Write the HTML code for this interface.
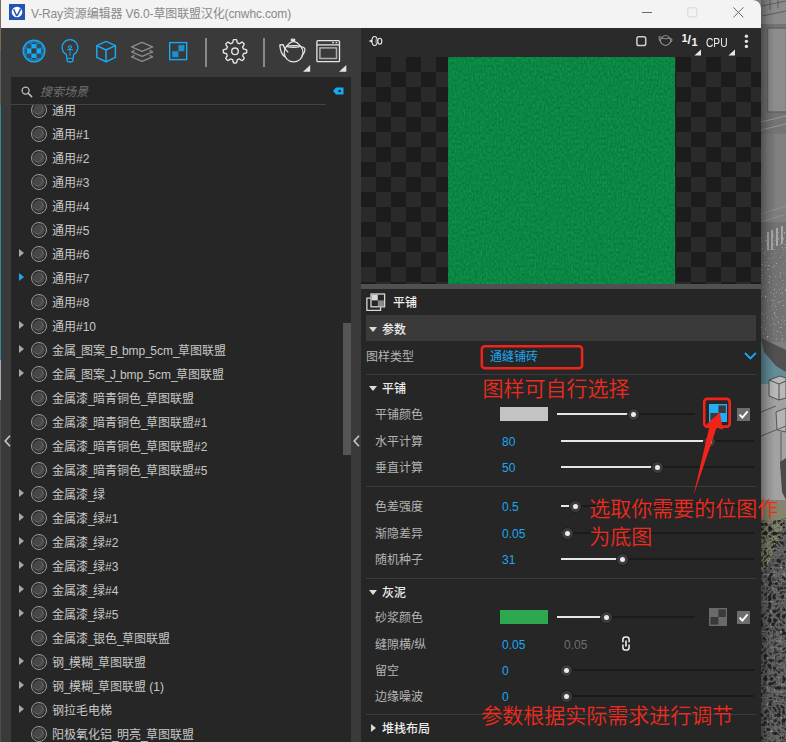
<!DOCTYPE html>
<html lang="zh-CN"><head><meta charset="utf-8"><title>V-Ray资源编辑器</title>
<style>
*{box-sizing:border-box;margin:0;padding:0}
html,body{width:786px;height:742px;overflow:hidden;background:#7d7d7d}
body{position:relative;font-family:"Liberation Sans","Noto Sans CJK SC",sans-serif;font-size:12px;color:#c8c8c8}
.abs{position:absolute}
#bg{left:761px;top:0;width:25px;height:742px}
#ledge{left:0;top:0;width:1px;height:742px;background:linear-gradient(#7a6858 0,#7a6858 50px,#5c6058 50px,#5c6058 105px,#2f8a9c 105px,#2f8a9c 360px,#aaa 360px,#aaa 400px,#4c4c4c 400px)}
#win{left:1px;top:0;width:760px;height:742px;background:#262626;border-top-right-radius:8px;overflow:hidden}
#title{left:0;top:0;width:760px;height:28px;background:#f3f3f3}
#title .t{left:30px;top:1px;line-height:27px;color:#898989;font-size:12px;white-space:nowrap;letter-spacing:-0.14px}
#lp{left:0;top:28px;width:360px;height:714px;background:#3a3a3a}
#search{left:10px;top:49px;width:340px;height:665px;background:#262626}
.it{position:absolute;left:0;width:332px;height:24px;line-height:24px;white-space:nowrap}
.it span{position:absolute;left:41px;top:1px;color:#c6c6c6;font-size:12px}
.it u{text-decoration:none;letter-spacing:-1.7px}
.it u.c{letter-spacing:-1.1px}
.ball{position:absolute;left:19.5px;top:3.5px;width:16px;height:16px;border-radius:50%;border:1px solid #9c9c9c;background:radial-gradient(circle at 38% 36%,rgba(0,0,0,0) 4.6px,rgba(255,255,255,.13) 5.2px,rgba(0,0,0,0) 6.4px),radial-gradient(circle at 50% 50%,#484848 0,#484848 5.4px,#262626 6px)}
.tri{position:absolute;left:8px;top:7.3px;width:0;height:0;border-left:5.5px solid #a8a8a8;border-top:4.4px solid transparent;border-bottom:4.4px solid transparent}
.tri.b{border-left-color:#18a9f2}
#rp{left:360px;top:28px;width:400px;height:714px;background:#262626}
#ptool{left:0;top:0;width:400px;height:29px;background:#2a2a2a}
#prev{left:0;top:29px;width:400px;height:227px;background-color:#2a2a2a;
 background-image:conic-gradient(#1c1c1c 25%,#2a2a2a 0 50%,#1c1c1c 0 75%,#2a2a2a 0);background-size:30px 30px;background-position:0 0}
#green{left:87px;top:0;width:227px;height:227px;background:#0e9a4b}
#split{left:0;top:256px;width:400px;height:5px;background:#505050}
.lbl{position:absolute;white-space:nowrap;line-height:16px;color:#b4b4b4}
.hd{position:absolute;white-space:nowrap;line-height:16px;color:#ececec;font-weight:500}
.val{position:absolute;white-space:nowrap;line-height:16px;color:#1ea7f0}
.sep{position:absolute;left:5px;width:390px;height:1px;background:#3c3c3c}
.trk{position:absolute;height:2px;background:#1a1a1a}
.fil{position:absolute;height:2px;background:#e6e6e6}
.knb{position:absolute;width:11px;height:11px;border-radius:50%;background:#ececec;border:3px solid #3c3c3c;box-shadow:0 0 0 1px #1e1e1e}
.dn{position:absolute;width:0;height:0;border-top:5.5px solid #dcdcdc;border-left:4px solid transparent;border-right:4px solid transparent}
.rt{position:absolute;width:0;height:0;border-left:5px solid #d8d8d8;border-top:4px solid transparent;border-bottom:4px solid transparent}
.chk{position:absolute;width:13px;height:13px;background:#6e6e6e}
.red{position:absolute;white-space:nowrap;color:#f02a1e;font-family:"Liberation Sans","Noto Sans CJK SC",sans-serif;font-size:21px;line-height:26px;font-weight:350;letter-spacing:0}
svg{position:absolute;overflow:visible}
</style></head><body>
<div id="bg" class="abs"><svg style="left:0;top:0" width="25" height="742" viewBox="761 0 25 742">
<defs>
 <linearGradient id="sh" x1="0" x2="1" y1="0" y2="0"><stop offset="0" stop-color="#000" stop-opacity=".34"/><stop offset=".5" stop-color="#000" stop-opacity=".12"/><stop offset="1" stop-color="#000" stop-opacity="0"/></linearGradient>
 <filter id="sp" color-interpolation-filters="sRGB" x="0" y="0" width="100%" height="100%"><feTurbulence type="fractalNoise" baseFrequency=".55" numOctaves="2" seed="7"/><feColorMatrix type="matrix" values="0 0 0 0 1  0 0 0 0 1  0 0 0 0 1  0 0 3.2 0 -2.05"/></filter>
 <filter id="dk" color-interpolation-filters="sRGB" x="0" y="0" width="100%" height="100%"><feTurbulence type="turbulence" baseFrequency=".22" numOctaves="2" seed="11"/><feColorMatrix type="matrix" values="0 0 0 0 .12  0 0 0 0 .12  0 0 0 0 .12  0 2.6 0 0 -.35"/></filter>
 <filter id="lt" color-interpolation-filters="sRGB" x="0" y="0" width="100%" height="100%"><feTurbulence type="fractalNoise" baseFrequency=".3" numOctaves="1" seed="23"/><feColorMatrix type="matrix" values="0 0 0 0 .82  0 0 0 0 .82  0 0 0 0 .82  2.8 0 0 0 -1.75"/></filter>
</defs>
<rect x="761" y="0" width="25" height="742" fill="#7e7e7e"/>
<rect x="761" y="0" width="25" height="24" fill="#8b8b8b"/>
<path d="M762 6 L786 1 M762 16 L786 11 M770 0 V10 M778 0 V8" stroke="#5e5e5e" stroke-width="1" fill="none"/>
<rect x="761" y="24" width="25" height="110" fill="#747474"/>
<rect x="767.5" y="28" width="19" height="84" fill="#8d8d8d" stroke="#636363" stroke-width="1.4"/>
<path d="M761 122 L786 116 M761 130 L786 124" stroke="#9a9a9a" stroke-width="1" fill="none"/>
<rect x="761" y="134" width="25" height="80" fill="#7b7b7b"/>
<rect x="775" y="134" width="11" height="78" fill="#808080"/>
<path d="M761 214 L786 206 M761 222 L786 214" stroke="#8f8f8f" stroke-width="1" fill="none"/>
<rect x="761" y="222" width="25" height="120" fill="#727272"/>
<path d="M768 232 V250 M772 230 V250 M777 228 V246 M782 226 V244" stroke="#c8c8c8" stroke-width="1.2"/>
<rect x="761" y="232" width="25" height="110" filter="url(#sp)" opacity=".8"/>
<path d="M761 342 L775 346 L786 352 V392 L761 392 Z" fill="#628d99"/>
<path d="M761 338 L786 350 V372 L776 366 L764 352 Z" fill="#505050"/>
<rect x="761" y="384" width="25" height="122" fill="#a2a2a2"/>
<path d="M769 380 L780 376 L786 378 V398 L779 400 L769 396 Z" fill="#b9b9b9" stroke="#4e4e4e" stroke-width="1"/>
<path d="M769 380 L779 384 L786 381 M779 384 V400" stroke="#4e4e4e" stroke-width="1" fill="none"/>
<path d="M776 412 L786 408 V432 L777 430 Z" fill="#b4b4b4" stroke="#555" stroke-width="1"/>
<path d="M761 412 L776 406 M761 436 L786 426 M781 432 V470" stroke="#5a5a5a" stroke-width="1" fill="none"/>
<path d="M780 462 L786 458 V500 L782 492 Z" fill="#4a4a4a"/>
<rect x="761" y="500" width="25" height="70" fill="#83866c"/>
<path d="M761 528 L786 518 M761 540 L786 530" stroke="#5c5c50" stroke-width="1" fill="none"/>
<path d="M761 574 L770 560 L778 540 L786 520 V742 H761 Z" fill="#666"/>
<rect x="761" y="520" width="25" height="222" filter="url(#dk)"/>
<rect x="761" y="560" width="25" height="182" filter="url(#lt)"/>
<rect x="761" y="0" width="14" height="742" fill="url(#sh)"/>
</svg></div>
<div id="ledge" class="abs"></div>
<div id="win" class="abs">
 <div id="title" class="abs">
  <svg style="left:8px;top:4px" width="16" height="16" viewBox="0 0 16 16"><rect width="16" height="16" fill="#2553b4"/><circle cx="8" cy="8" r="5.3" fill="#fff"/><path d="M4.6 5.2 L7.2 11 Q7.8 12 8.5 11 L11.8 4.6" fill="none" stroke="#2553b4" stroke-width="1.5"/></svg>
  <div class="abs t">V-Ray资源编辑器 V6.0-草图联盟汉化(cnwhc.com)</div>
  <svg style="left:641px;top:12px" width="11" height="2"><rect width="10" height="1" fill="#666"/></svg>
  <svg style="left:686px;top:7px" width="12" height="12"><rect x=".8" y=".8" width="9" height="9" rx="1.2" fill="none" stroke="#d6d6d6"/></svg>
  <svg style="left:732px;top:7px" width="12" height="12"><path d="M.4 .4 L10.4 10.4 M10.4 .4 L.4 10.4" stroke="#666" stroke-width="1" fill="none"/></svg>
 </div>
 <div id="lp" class="abs">
  <!-- toolbar icons placeholder -->
  <svg style="left:-1px;top:-28px" width="362" height="80" viewBox="0 0 362 80">
<defs><clipPath id="cs"><circle cx="34" cy="51" r="9.6"/></clipPath></defs>
<circle cx="34" cy="51" r="10.9" fill="#1d79ab" stroke="#18a9f2" stroke-width="1.2"/>
<g clip-path="url(#cs)">
 <rect x="26.8" y="44.1" width="14.5" height="13.8" fill="#2f4d5e"/><rect x="31.4" y="48.4" width="5.1" height="5.2" fill="#3a3a3a"/>
 <rect x="31.4" y="44.1" width="5.1" height="4.3" fill="#1aaaf4"/><rect x="31.4" y="53.6" width="5.1" height="4.3" fill="#1aaaf4"/>
 <rect x="26.8" y="48.4" width="4.6" height="5.2" fill="#1aaaf4"/><rect x="36.5" y="48.4" width="4.8" height="5.2" fill="#1aaaf4"/>
 <rect x="32" y="42.7" width="4" height="1.2" fill="#3b3d3e"/><rect x="32" y="58.1" width="4" height="1.2" fill="#3b3d3e"/>
 <rect x="25.5" y="49" width="1.2" height="4" fill="#3b3d3e"/><rect x="41.4" y="49" width="1.2" height="4" fill="#3b3d3e"/>
</g>
<!-- bulb -->
<g fill="none" stroke="#18a9f2" stroke-width="1.25" stroke-linejoin="round" stroke-linecap="round">
 <path d="M66.4 54.6 A7.9 7.9 0 1 1 73.6 54.6 L72.7 61.4 Q70 62.6 67.3 61.4 Z"/>
 <path d="M67.3 58.4 H72.7" stroke-width="1"/>
 <path d="M67.4 49.6 H72.6" stroke-width="1"/>
 <path d="M70 50 V55.6" stroke-width="1.6" opacity=".55"/>
 <circle cx="70" cy="47" r="1.5" stroke-width="1"/>
</g>
<!-- cube -->
<g fill="none" stroke="#18a9f2" stroke-width="1.5" stroke-linejoin="round">
 <path d="M106 41.4 L115.4 45.6 V57.4 L106 61.8 L96.8 57.4 V45.6 Z"/>
 <path d="M96.8 45.6 L106 50 L115.4 45.6 M106 50 V61.8"/>
</g>
<!-- layers -->
<g fill="none" stroke="#8c8c8c" stroke-width="1.4" stroke-linejoin="round">
 <path d="M142 42.4 L152.6 46.8 L142 51.4 L131.6 46.8 Z" fill="#3a3a3a"/>
 <path d="M134.6 50.4 L131.6 51.8 L142 56.4 L152.6 51.8 L149.6 50.4"/>
 <path d="M134.6 55.4 L131.6 56.8 L142 61.4 L152.6 56.8 L149.6 55.4"/>
</g>
<!-- texture -->
<rect x="169.7" y="42.6" width="17" height="17" fill="none" stroke="#18a9f2" stroke-width="1.4"/>
<rect x="178.4" y="45" width="6" height="6.2" fill="#1a90cf"/><rect x="172.2" y="51.2" width="6.2" height="6" fill="#1a90cf"/>
<rect x="205" y="38" width="2" height="29" fill="#8a8a8a"/>
<!-- gear -->
<g fill="none" stroke="#e4e4e4" stroke-width="1.4" stroke-linejoin="round">
 <path d="M246.70 51.30 L246.69 51.76 L246.66 52.22 L246.62 52.68 L245.94 53.03 L245.00 53.29 L244.06 53.48 L243.37 53.66 L243.27 53.99 L243.16 54.31 L243.04 54.63 L242.90 54.94 L242.75 55.25 L242.59 55.55 L242.95 56.17 L243.48 56.97 L243.96 57.81 L244.19 58.54 L243.90 58.90 L243.59 59.24 L243.27 59.57 L242.94 59.89 L242.60 60.20 L242.24 60.49 L241.51 60.26 L240.67 59.78 L239.87 59.25 L239.25 58.89 L238.95 59.05 L238.64 59.20 L238.33 59.34 L238.01 59.46 L237.69 59.57 L237.36 59.67 L237.18 60.36 L236.99 61.30 L236.73 62.24 L236.38 62.92 L235.92 62.96 L235.46 62.99 L235.00 63.00 L234.54 62.99 L234.08 62.96 L233.62 62.92 L233.27 62.24 L233.01 61.30 L232.82 60.36 L232.64 59.67 L232.31 59.57 L231.99 59.46 L231.67 59.34 L231.36 59.20 L231.05 59.05 L230.75 58.89 L230.13 59.25 L229.33 59.78 L228.49 60.26 L227.76 60.49 L227.40 60.20 L227.06 59.89 L226.73 59.57 L226.41 59.24 L226.10 58.90 L225.81 58.54 L226.04 57.81 L226.52 56.97 L227.05 56.17 L227.41 55.55 L227.25 55.25 L227.10 54.94 L226.96 54.63 L226.84 54.31 L226.73 53.99 L226.63 53.66 L225.94 53.48 L225.00 53.29 L224.06 53.03 L223.38 52.68 L223.34 52.22 L223.31 51.76 L223.30 51.30 L223.31 50.84 L223.34 50.38 L223.38 49.92 L224.06 49.57 L225.00 49.31 L225.94 49.12 L226.63 48.94 L226.73 48.61 L226.84 48.29 L226.96 47.97 L227.10 47.66 L227.25 47.35 L227.41 47.05 L227.05 46.43 L226.52 45.63 L226.04 44.79 L225.81 44.06 L226.10 43.70 L226.41 43.36 L226.73 43.03 L227.06 42.71 L227.40 42.40 L227.76 42.11 L228.49 42.34 L229.33 42.82 L230.13 43.35 L230.75 43.71 L231.05 43.55 L231.36 43.40 L231.67 43.26 L231.99 43.14 L232.31 43.03 L232.64 42.93 L232.82 42.24 L233.01 41.30 L233.27 40.36 L233.62 39.68 L234.08 39.64 L234.54 39.61 L235.00 39.60 L235.46 39.61 L235.92 39.64 L236.38 39.68 L236.73 40.36 L236.99 41.30 L237.18 42.24 L237.36 42.93 L237.69 43.03 L238.01 43.14 L238.33 43.26 L238.64 43.40 L238.95 43.55 L239.25 43.71 L239.87 43.35 L240.67 42.82 L241.51 42.34 L242.24 42.11 L242.60 42.40 L242.94 42.71 L243.27 43.03 L243.59 43.36 L243.90 43.70 L244.19 44.06 L243.96 44.79 L243.48 45.63 L242.95 46.43 L242.59 47.05 L242.75 47.35 L242.90 47.66 L243.04 47.97 L243.16 48.29 L243.27 48.61 L243.37 48.94 L244.06 49.12 L245.00 49.31 L245.94 49.57 L246.62 49.92 L246.66 50.38 L246.69 50.84 Z"/>
 <circle cx="235" cy="51.3" r="3.3"/>
</g>
<rect x="263" y="38" width="2" height="29" fill="#8a8a8a"/>
<!-- teapot -->
<g fill="none" stroke="#e6e6e6" stroke-width="1.25" stroke-linecap="round" stroke-linejoin="round">
 <path d="M286.5 46.4 A9.4 9.4 0 1 0 300.7 46.4"/>
 <path d="M286.5 46.4 Q293.6 36.6 300.7 46.4"/>
 <ellipse cx="293.6" cy="46.5" rx="6.4" ry=".8"/>
 <ellipse cx="293" cy="39.9" rx="1.9" ry=".8"/>
 <path d="M285 56.8 Q280.4 54 279.8 44.9 L283.2 44.7 Q284.2 49.2 287.9 51.9"/>
 <path d="M301.4 46.9 Q305.8 47.4 304.7 51 Q303.8 54 302 55.6"/>
</g>
<path d="M310.2 65 V71.8 H303 Z" fill="#e4e4e4"/>
<!-- window -->
<g fill="none" stroke="#e6e6e6" stroke-width="1.3">
 <rect x="316.9" y="40.7" width="22.6" height="21" rx="1"/>
 <path d="M316.9 44.9 H339.5"/>
 <rect x="319.9" y="47.9" width="16.6" height="10.6" stroke="#adadad" stroke-width="1.5"/>
</g>
<rect x="332.2" y="42" width="1.7" height="1.3" fill="#e4e4e4"/><rect x="335.6" y="42" width="1.7" height="1.3" fill="#e4e4e4"/>
<path d="M346.3 65 V71.8 H339.1 Z" fill="#e4e4e4"/>
</svg>
  <div id="search" class="abs">
   <svg style="left:10px;top:9px" width="12" height="12" viewBox="0 0 12 12"><circle cx="4.6" cy="4.6" r="3.5" fill="none" stroke="#bcbcbc" stroke-width="1.3"/><path d="M7.2 7.2 L10.6 10.6" stroke="#bcbcbc" stroke-width="1.6" stroke-linecap="round"/></svg>
   <div class="abs" style="left:29px;top:7px;font-style:italic;color:#707070;font-size:12px;line-height:16px;white-space:nowrap">搜索场景</div>
   <svg style="left:322px;top:10px" width="11" height="8" viewBox="0 0 11 8"><path d="M0 4 L3 .5 H10.5 V7.5 H3 Z" fill="#18a9f2"/><circle cx="6.6" cy="4" r="1.3" fill="#262626"/></svg>
   <div class="abs" style="left:0;top:27px;width:315px;height:1px;background:#444"></div>
   <div class="abs" id="list" style="left:0;top:28px;width:340px;height:637px;overflow:hidden">
    <div class="abs" style="left:0;top:-105px;width:340px;height:760px">
<div class="it" style="top:98px"><i class="ball"></i><span>通用</span></div>
<div class="it" style="top:122px"><i class="ball"></i><span>通用#1</span></div>
<div class="it" style="top:146px"><i class="ball"></i><span>通用#2</span></div>
<div class="it" style="top:170px"><i class="ball"></i><span>通用#3</span></div>
<div class="it" style="top:194px"><i class="ball"></i><span>通用#4</span></div>
<div class="it" style="top:218px"><i class="ball"></i><span>通用#5</span></div>
<div class="it" style="top:242px"><i class="tri"></i><i class="ball"></i><span>通用#6</span></div>
<div class="it" style="top:266px"><i class="tri b"></i><i class="ball"></i><span>通用#7</span></div>
<div class="it" style="top:290px"><i class="ball"></i><span>通用#8</span></div>
<div class="it" style="top:314px"><i class="tri"></i><i class="ball"></i><span>通用#10</span></div>
<div class="it" style="top:338px"><i class="tri"></i><i class="ball"></i><span>金属<u>_</u>图案<u>_</u><u class="c">B</u><u>_</u>bmp<u>_</u>5cm<u>_</u>草图联盟</span></div>
<div class="it" style="top:362px"><i class="tri"></i><i class="ball"></i><span>金属<u>_</u>图案<u>_</u><u class="c">J</u><u>_</u>bmp<u>_</u>5cm<u>_</u>草图联盟</span></div>
<div class="it" style="top:386px"><i class="ball"></i><span>金属漆<u>_</u>暗青铜色<u>_</u>草图联盟</span></div>
<div class="it" style="top:410px"><i class="ball"></i><span>金属漆<u>_</u>暗青铜色<u>_</u>草图联盟#1</span></div>
<div class="it" style="top:434px"><i class="ball"></i><span>金属漆<u>_</u>暗青铜色<u>_</u>草图联盟#2</span></div>
<div class="it" style="top:458px"><i class="ball"></i><span>金属漆<u>_</u>暗青铜色<u>_</u>草图联盟#5</span></div>
<div class="it" style="top:482px"><i class="tri"></i><i class="ball"></i><span>金属漆<u>_</u>绿</span></div>
<div class="it" style="top:506px"><i class="tri"></i><i class="ball"></i><span>金属漆<u>_</u>绿#1</span></div>
<div class="it" style="top:530px"><i class="tri"></i><i class="ball"></i><span>金属漆<u>_</u>绿#2</span></div>
<div class="it" style="top:554px"><i class="tri"></i><i class="ball"></i><span>金属漆<u>_</u>绿#3</span></div>
<div class="it" style="top:578px"><i class="tri"></i><i class="ball"></i><span>金属漆<u>_</u>绿#4</span></div>
<div class="it" style="top:602px"><i class="tri"></i><i class="ball"></i><span>金属漆<u>_</u>绿#5</span></div>
<div class="it" style="top:626px"><i class="ball"></i><span>金属漆<u>_</u>银色<u>_</u>草图联盟</span></div>
<div class="it" style="top:650px"><i class="tri"></i><i class="ball"></i><span>钢<u>_</u>模糊<u>_</u>草图联盟</span></div>
<div class="it" style="top:674px"><i class="tri"></i><i class="ball"></i><span>钢<u>_</u>模糊<u>_</u>草图联盟 (1)</span></div>
<div class="it" style="top:698px"><i class="tri"></i><i class="ball"></i><span>钢拉毛电梯</span></div>
<div class="it" style="top:722px"><i class="ball"></i><span>阳极氧化铝<u>_</u>明亮<u>_</u>草图联盟</span></div>
    </div>
   </div>
   <div class="abs" style="left:332px;top:246px;width:8px;height:132px;background:#555"></div>
  </div>
  <svg style="left:3px;top:407px" width="7" height="12"><path d="M6 .8 L1.2 6 L6 11.2" fill="none" stroke="#c8c8c8" stroke-width="1.6"/></svg>
  <svg style="left:352px;top:407px" width="7" height="12"><path d="M6 .8 L1.2 6 L6 11.2" fill="none" stroke="#c8c8c8" stroke-width="1.6"/></svg>
 </div>
 <div id="rp" class="abs">
  <div id="ptool" class="abs"><svg style="left:-361px;top:-28px" width="786" height="60" viewBox="0 0 786 60">
<g fill="none" stroke="#ececec" stroke-width="1.1">
 <ellipse cx="374.6" cy="41" rx="2.6" ry="4.5"/><ellipse cx="379.8" cy="41.2" rx="2" ry="3"/>
 <path d="M376.2 38.6 Q375 41 376.2 43.6" stroke="#9a9a9a" stroke-width=".8"/>
</g>
<path d="M368.6 41 L372 39.6 V42.4 Z" fill="#ececec"/>
<rect x="636.9" y="36.7" width="8.8" height="8.8" rx="1.8" fill="none" stroke="#cfcfcf" stroke-width="1.5"/>
<g fill="none" stroke="#8f8f8f" stroke-width="1.1" stroke-linejoin="round" stroke-linecap="round" transform="translate(33.3,1.3) scale(.95,.92)">
 <path d="M661 40 A5.2 5.2 0 1 0 670 40"/>
 <path d="M661 40 Q665.5 34.4 670 40 Q665.5 41.6 661 40"/>
 <path d="M660.6 44.6 Q658.6 43 658.6 38.6 L660.4 38.6"/>
 <path d="M670.6 40.4 Q673 41 672 43.2 L670.8 44.4"/>
</g>
<path d="M701 49.4 V55.6 H694.4 Z" fill="#e8e8e8"/>
<path d="M735 49.4 V55.6 H728.4 Z" fill="#e8e8e8"/>
<circle cx="746.4" cy="36.2" r="1.65" fill="#e8e8e8"/><circle cx="746.4" cy="41.3" r="1.65" fill="#e8e8e8"/><circle cx="746.4" cy="46.4" r="1.65" fill="#e8e8e8"/>
</svg>
<div class="abs" style="left:320.6px;top:1.5px;font-size:11px;font-weight:bold;color:#f4f4f4;line-height:16px">1</div><div class="abs" style="left:326.4px;top:4.4px;font-size:12.5px;font-weight:bold;color:#f4f4f4;line-height:16px">/</div><div class="abs" style="left:330.4px;top:5.6px;font-size:11px;font-weight:bold;color:#f4f4f4;line-height:16px">1</div>
<div class="abs" style="left:345px;top:7px;font-size:12px;color:#f0f0f0;line-height:16px;white-space:nowrap;transform:scaleX(.85);transform-origin:0 0">CPU</div>
</div>
  <div id="prev" class="abs"><div id="green" class="abs"><svg style="left:0;top:0" width="227" height="227" viewBox="0 0 227 227">
<defs>
 <filter id="gn" color-interpolation-filters="sRGB" x="0" y="0" width="100%" height="100%"><feTurbulence type="fractalNoise" baseFrequency=".55 .36" numOctaves="1" seed="5"/><feColorMatrix type="matrix" values="0 0 0 0 .02  0 0 0 0 .44  0 0 0 0 .22  1.7 0 0 0 -.52"/></filter>
 <pattern id="gp" width="2.8375" height="4.54" patternUnits="userSpaceOnUse"><rect width="1" height="4.54" fill="#0a7a3c" opacity=".35"/><rect width="2.8375" height=".9" fill="#0a7a3c" opacity=".18"/></pattern>
</defs>
<rect width="227" height="227" fill="#0c954c"/>
<rect width="227" height="227" filter="url(#gn)"/>
<rect width="227" height="227" fill="url(#gp)"/>
</svg></div></div>
  <div id="split" class="abs"></div>
  <svg style="left:5px;top:265px" width="20" height="19" viewBox="0 0 20 19"><path d="M4.4 5.2 H.9 V17.4 H14.6 V14.2" fill="none" stroke="#d8d8d8" stroke-width="1.3"/><rect x="5" y="1" width="13.6" height="12.8" fill="#262626" stroke="#d8d8d8" stroke-width="1.3"/><rect x="5.7" y="1.7" width="6.1" height="5.7" fill="#d8d8d8"/><rect x="11.8" y="7.4" width="6.1" height="5.7" fill="#8a8a8a"/></svg>
<div class="hd" style="left:32px;top:267px;color:#f0f0f0">平铺</div>
<div class="abs" style="left:5px;top:287px;width:390px;height:26px;background:#3a3a3a"></div>
<i class="dn" style="left:8px;top:299px"></i>
<div class="hd" style="left:21px;top:294px;">参数</div>
<div class="lbl" style="left:5px;top:321px;">图样类型</div>
<div class="val" style="left:129px;top:321px;">通缝铺砖</div>
<svg style="left:383px;top:324px" width="13" height="8"><path d="M1 1 L6.4 6.4 L11.8 1" fill="none" stroke="#18a9f2" stroke-width="1.8"/></svg>
<div class="sep" style="top:346px"></div>
<i class="dn" style="left:8px;top:358px"></i>
<div class="hd" style="left:21px;top:353px;">平铺</div>
<div class="lbl" style="left:14px;top:379px;">平铺颜色</div>
<div class="abs" style="left:139px;top:379px;width:48px;height:14px;background:#c3c3c3"></div>
<div class="trk" style="left:196px;top:385px;width:138px"></div>
<div class="fil" style="left:196px;top:385px;width:76px"></div>
<div class="knb" style="left:266.5px;top:380.5px"></div>
<svg style="left:348px;top:376px" width="18" height="18" viewBox="0 0 18 18"><rect width="18" height="18" fill="#22adf5"/><rect x="9.4" y="1.4" width="7.4" height="7.6" fill="#3a3a3a"/><rect x="1.4" y="9" width="8" height="7.6" fill="#3a3a3a"/></svg>
<div class="chk" style="left:376px;top:380px"><svg width="13" height="13" viewBox="0 0 13 13"><path d="M2.6 6.6 L5.4 9.6 L10.6 3.4" fill="none" stroke="#fff" stroke-width="1.9"/></svg></div>
<div class="lbl" style="left:14px;top:406px;">水平计算</div>
<div class="val" style="left:141px;top:406px;">80</div>
<div class="trk" style="left:200px;top:412px;width:193px"></div>
<div class="fil" style="left:200px;top:412px;width:148px"></div>
<div class="knb" style="left:342.5px;top:407.5px"></div>
<div class="lbl" style="left:14px;top:432px;">垂直计算</div>
<div class="val" style="left:141px;top:432px;">50</div>
<div class="trk" style="left:200px;top:438px;width:193px"></div>
<div class="fil" style="left:200px;top:438px;width:96px"></div>
<div class="knb" style="left:290.5px;top:433.5px"></div>
<div class="sep" style="top:458px"></div>
<div class="lbl" style="left:14px;top:471px;">色差强度</div>
<div class="val" style="left:141px;top:471px;">0.5</div>
<div class="trk" style="left:200px;top:477px;width:193px"></div>
<div class="fil" style="left:200px;top:477px;width:14px"></div>
<div class="knb" style="left:208.5px;top:472.5px"></div>
<div class="lbl" style="left:14px;top:498px;">渐隐差异</div>
<div class="val" style="left:141px;top:498px;">0.05</div>
<div class="trk" style="left:200px;top:504px;width:193px"></div>
<div class="fil" style="left:200px;top:504px;width:6px"></div>
<div class="knb" style="left:200.5px;top:499.5px"></div>
<div class="lbl" style="left:14px;top:524px;">随机种子</div>
<div class="val" style="left:141px;top:524px;">31</div>
<div class="trk" style="left:200px;top:530px;width:193px"></div>
<div class="fil" style="left:200px;top:530px;width:61px"></div>
<div class="knb" style="left:255.5px;top:525.5px"></div>
<div class="sep" style="top:550px"></div>
<i class="dn" style="left:8px;top:562px"></i>
<div class="hd" style="left:21px;top:557px;">灰泥</div>
<div class="lbl" style="left:14px;top:582px;">砂浆颜色</div>
<div class="abs" style="left:139px;top:582px;width:48px;height:14px;background:#2ea84f"></div>
<div class="trk" style="left:196px;top:588px;width:138px"></div>
<div class="fil" style="left:196px;top:588px;width:49px"></div>
<div class="knb" style="left:239.5px;top:583.5px"></div>
<svg style="left:348px;top:580px" width="18" height="18" viewBox="0 0 18 18"><rect width="18" height="18" fill="#6a6a6a"/><rect x="9.4" y="1.4" width="7.4" height="7.6" fill="#3a3a3a"/><rect x="1.4" y="9" width="8" height="7.6" fill="#3a3a3a"/></svg>
<div class="chk" style="left:376px;top:583px"><svg width="13" height="13" viewBox="0 0 13 13"><path d="M2.6 6.6 L5.4 9.6 L10.6 3.4" fill="none" stroke="#fff" stroke-width="1.9"/></svg></div>
<div class="lbl" style="left:14px;top:609px;">缝隙横/纵</div>
<div class="val" style="left:141px;top:609px;">0.05</div>
<div class="lbl" style="left:203px;top:609px;color:#6e6e6e">0.05</div>
<svg style="left:261px;top:608px" width="8" height="15" viewBox="0 0 8 15"><rect x=".9" y=".9" width="6.2" height="13.2" rx="2.6" fill="none" stroke="#f0f0f0" stroke-width="1.5"/><rect x="0" y="6.3" width="8" height="2.2" fill="#262626"/><path d="M4 4.6 V10.4" stroke="#f0f0f0" stroke-width="1.6"/></svg>
<div class="lbl" style="left:14px;top:635px;">留空</div>
<div class="val" style="left:141px;top:635px;">0</div>
<div class="trk" style="left:200px;top:641px;width:193px"></div>
<div class="fil" style="left:200px;top:641px;width:5px"></div>
<div class="knb" style="left:199.5px;top:636.5px"></div>
<div class="lbl" style="left:14px;top:661px;">边缘噪波</div>
<div class="val" style="left:141px;top:661px;">0</div>
<div class="trk" style="left:200px;top:667px;width:193px"></div>
<div class="fil" style="left:200px;top:667px;width:5px"></div>
<div class="knb" style="left:199.5px;top:662.5px"></div>
<div class="sep" style="top:686px"></div>
<i class="rt" style="left:10px;top:696px"></i>
<div class="hd" style="left:21px;top:693px;">堆栈布局</div>
 </div>
</div>
<div class="red" style="left:482.5px;top:376px">图样可自行选择</div>
<div class="red" style="left:589.3px;top:496px">选取你需要的位图作</div>
<div class="red" style="left:589.3px;top:524px">为底图</div>
<div class="red" style="left:481.2px;top:703px">参数根据实际需求进行调节</div>
<svg style="left:0;top:0" width="786" height="742" viewBox="0 0 786 742">
<rect x="481.8" y="346.2" width="100.3" height="22" rx="3" fill="none" stroke="#f0241a" stroke-width="2.5"/>
<rect x="704.2" y="398.9" width="25.5" height="27.7" rx="3" fill="none" stroke="#f0241a" stroke-width="2.6"/>
<path d="M719.8 412.6 L722.9 429.6 L716.6 427.8 L693.4 495.8 L709.2 427.4 L706.4 424.4 Z" fill="#f0241a"/>
</svg>
</body></html>
